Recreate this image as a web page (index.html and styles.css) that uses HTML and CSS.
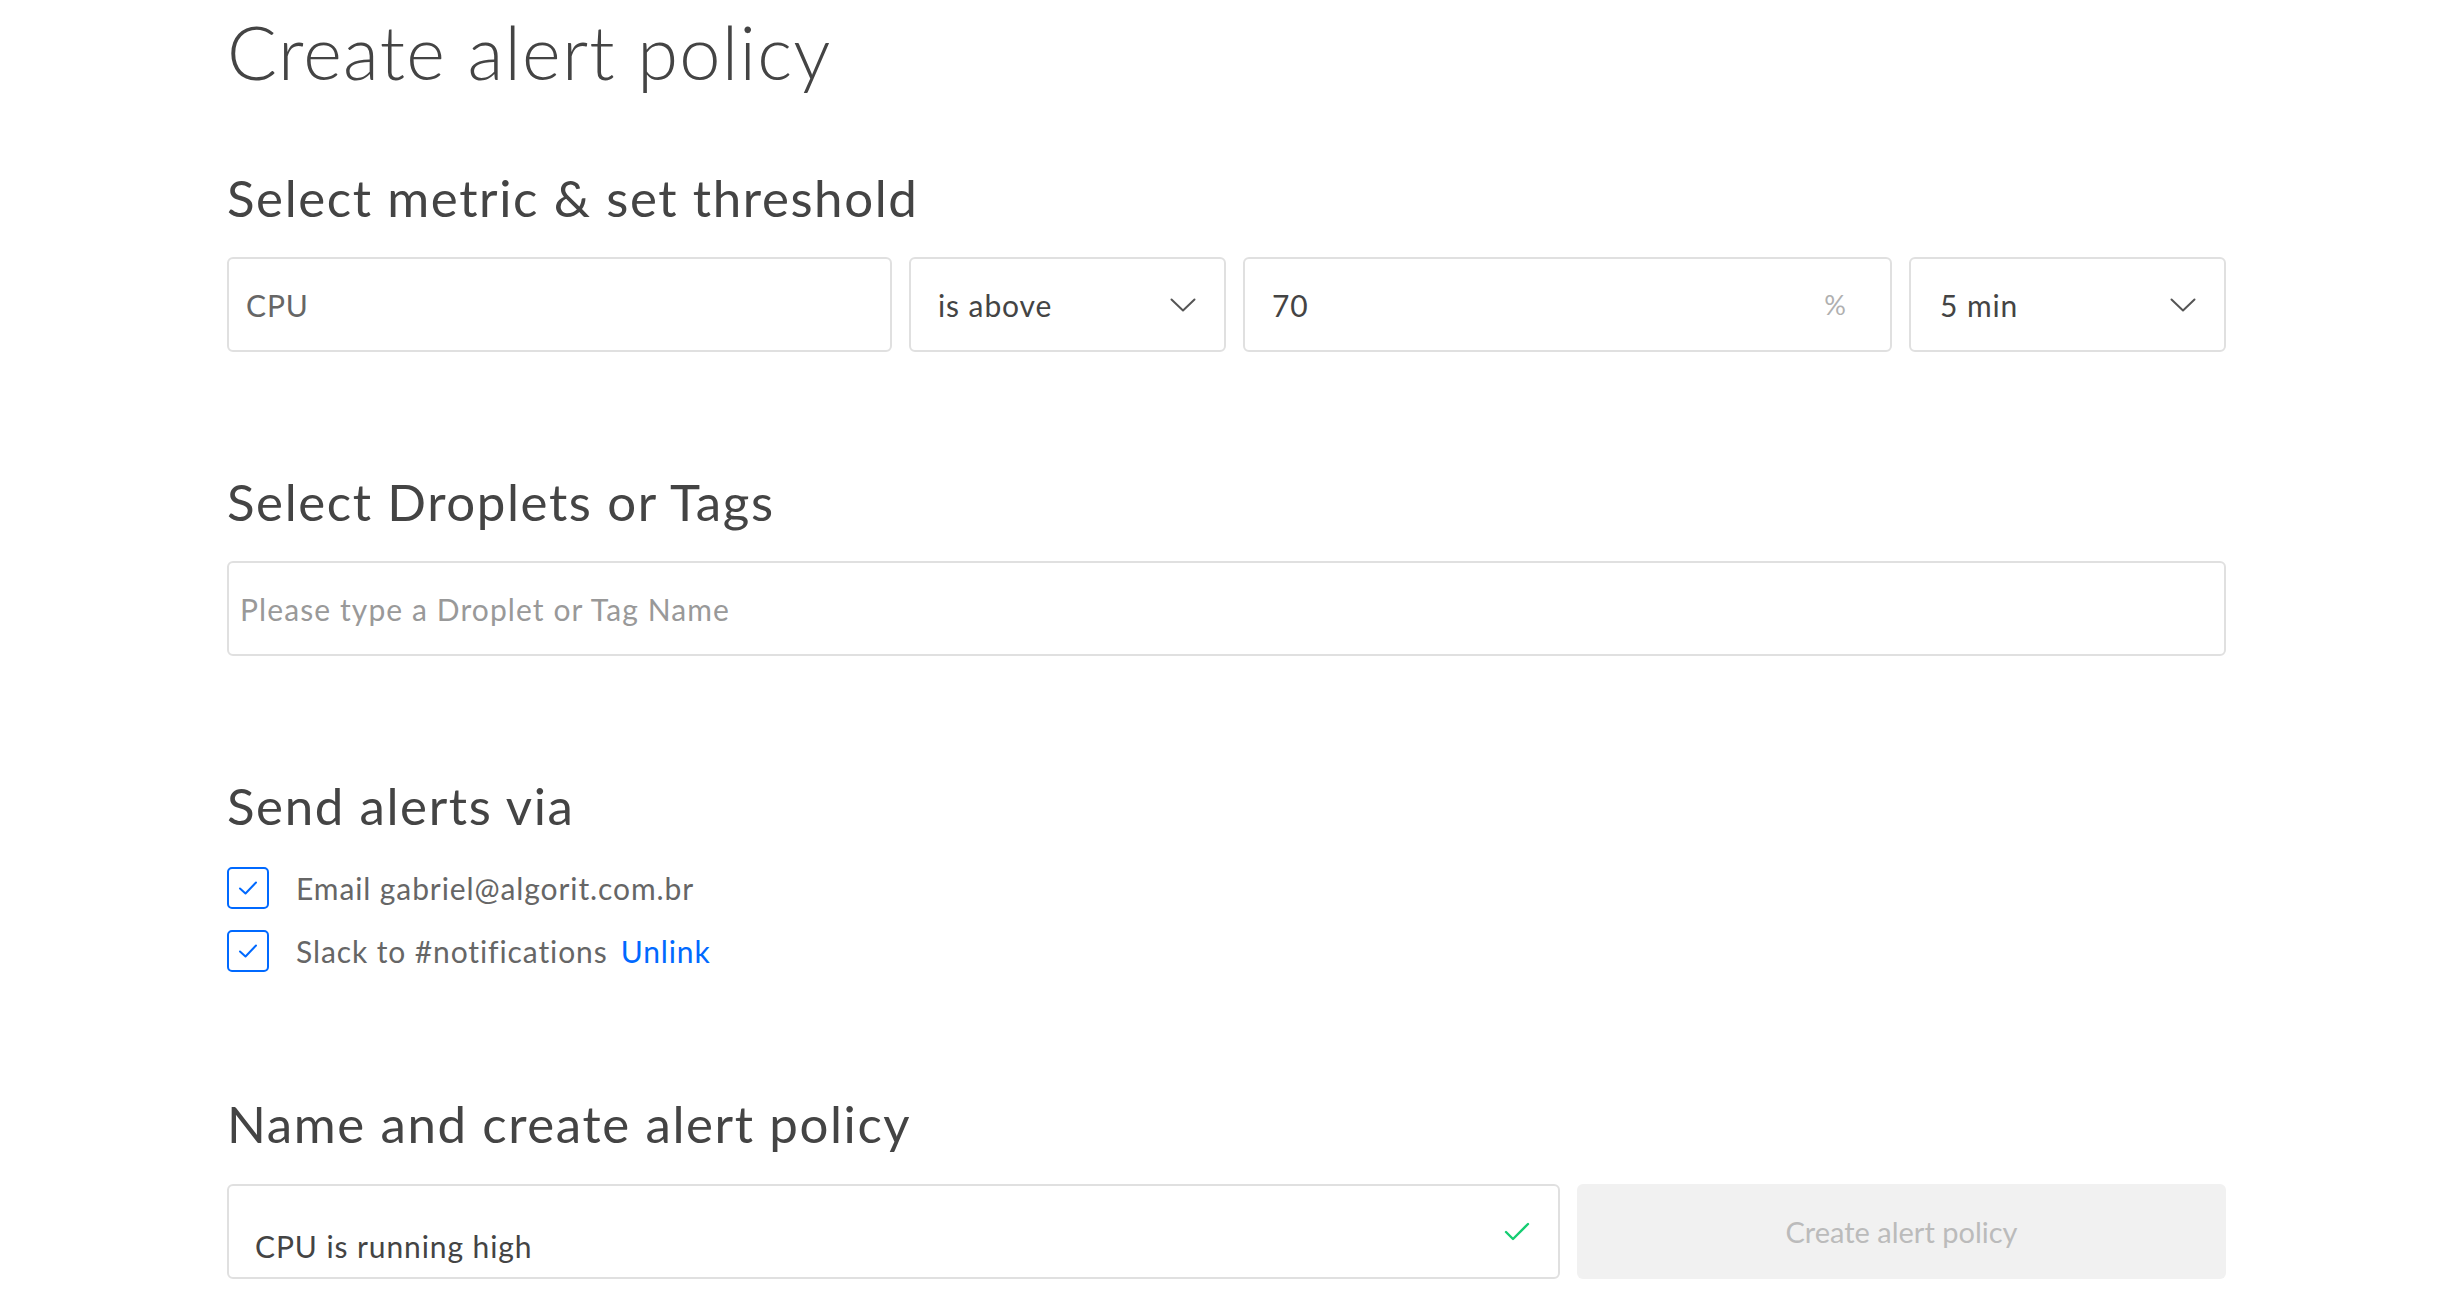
FILE: index.html
```html
<!DOCTYPE html>
<html lang="en">
<head>
<meta charset="utf-8">
<title>Create alert policy</title>
<link rel="stylesheet" href="styles.css">
</head>
<body>
<main class="page">
  <h1 class="page-title">Create alert policy</h1>

  <section class="section">
    <h2 class="section-title">Select metric &amp; set threshold</h2>
    <div class="metric-row">
      <div class="field field-metric"><span class="value muted">CPU</span></div>
      <div class="field field-select"><span class="value">is above</span>
        <svg class="chevron" width="26" height="14" viewBox="0 0 26 14"><polyline points="1.5,1.5 13,12.5 24.5,1.5" fill="none" stroke="#555" stroke-width="2" stroke-linecap="round" stroke-linejoin="round"/></svg>
      </div>
      <div class="field field-threshold"><span class="value">70</span><span class="unit">%</span></div>
      <div class="field field-select field-window"><span class="value">5 min</span>
        <svg class="chevron" width="26" height="14" viewBox="0 0 26 14"><polyline points="1.5,1.5 13,12.5 24.5,1.5" fill="none" stroke="#555" stroke-width="2" stroke-linecap="round" stroke-linejoin="round"/></svg>
      </div>
    </div>
  </section>

  <section class="section">
    <h2 class="section-title">Select Droplets or Tags</h2>
    <div class="field field-wide"><span class="placeholder">Please type a Droplet or Tag Name</span></div>
  </section>

  <section class="section section-alerts">
    <h2 class="section-title">Send alerts via</h2>
    <ul class="channel-list">
      <li class="channel">
        <span class="checkbox"><svg width="20" height="16" viewBox="0 0 20 16"><polyline points="2,8.5 7.5,13.5 18,2.5" fill="none" stroke="#0069ff" stroke-width="2" stroke-linecap="round" stroke-linejoin="round"/></svg></span>
        <span class="channel-label">Email gabriel@algorit.com.br</span>
      </li>
      <li class="channel">
        <span class="checkbox"><svg width="20" height="16" viewBox="0 0 20 16"><polyline points="2,8.5 7.5,13.5 18,2.5" fill="none" stroke="#0069ff" stroke-width="2" stroke-linecap="round" stroke-linejoin="round"/></svg></span>
        <span class="channel-label">Slack to #notifications</span>
        <a class="link" href="#">Unlink</a>
      </li>
    </ul>
  </section>

  <section class="section section-name">
    <h2 class="section-title">Name and create alert policy</h2>
    <div class="name-row">
      <div class="field field-name"><span class="value">CPU is running high</span>
        <svg class="valid" width="26" height="20" viewBox="0 0 26 20"><polyline points="2,10 9,17 24,2" fill="none" stroke="#15cd72" stroke-width="2.4" stroke-linecap="round" stroke-linejoin="round"/></svg>
      </div>
      <button class="btn-create" type="button" disabled>Create alert policy</button>
    </div>
  </section>
</main>
</body>
</html>
```

FILE: styles.css
```css
* { box-sizing: border-box; }

html, body {
  margin: 0;
  padding: 0;
  background: #fff;
}

body {
  font-family: Lato, "Liberation Sans", sans-serif;
  color: #444;
}

.page {
  width: 1999px;
  margin-left: 227px;
  padding-top: 12px;
}

.page-title {
  margin: 0;
  font-size: 74px;
  line-height: 80px;
  font-weight: 300;
  color: #444;
  letter-spacing: 1.25px;
}

.section {
  margin-top: 122px;
}

.section:first-of-type {
  margin-top: 78px;
}

.section-title {
  margin: 0 0 31px;
  font-size: 51px;
  line-height: 56px;
  font-weight: 400;
  color: #444;
  letter-spacing: 1.6px;
}

.metric-row {
  display: grid;
  grid-template-columns: 665fr 317fr 649fr 317fr;
  gap: 17px;
}

.field {
  height: 95px;
  border: 2px solid #e0e0e0;
  border-radius: 6px;
  display: flex;
  align-items: center;
  font-size: 30px;
  letter-spacing: 0.9px;
  color: #444;
  background: #fff;
}

.field-metric { padding-left: 17px; }

.field-select {
  padding: 0 28px 0 27px;
  justify-content: space-between;
}

.field-threshold {
  padding: 0 44px 0 27px;
  justify-content: space-between;
}

.field-window { padding-left: 29px; }

.muted { color: #666; }

.unit {
  color: #b0b0b0;
  font-size: 27px;
  letter-spacing: 0;
}

.field-wide {
  padding-left: 11px;
}

.placeholder { color: #999; letter-spacing: 1.1px; }

.section-alerts .section-title { margin-bottom: 33px; }

.channel-list {
  list-style: none;
  margin: 0;
  padding: 0;
  display: flex;
  flex-direction: column;
  gap: 21px;
}

.channel {
  display: flex;
  align-items: center;
  font-size: 30px;
  letter-spacing: 0.9px;
  color: #666;
}

.checkbox {
  width: 42px;
  height: 42px;
  border: 2px solid #0069ff;
  border-radius: 5px;
  display: flex;
  align-items: center;
  justify-content: center;
  margin-right: 27px;
}

.link {
  color: #0069ff;
  text-decoration: none;
  margin-left: 13px;
}

.section-name { margin-top: 124px; }
.section-name .section-title { margin-bottom: 32px; }

.name-row {
  display: grid;
  grid-template-columns: 1333fr 649fr;
  gap: 17px;
}

.field-name {
  padding: 28px 28px 0 26px;
  justify-content: space-between;
}

.field-name .valid {
  margin-top: -28px;
}

.btn-create {
  height: 95px;
  border: 0;
  border-radius: 6px;
  background: #f1f1f1;
  color: #bbb;
  font-family: Lato, "Liberation Sans", sans-serif;
  font-size: 29px;
  font-weight: 400;
  cursor: default;
}
```
